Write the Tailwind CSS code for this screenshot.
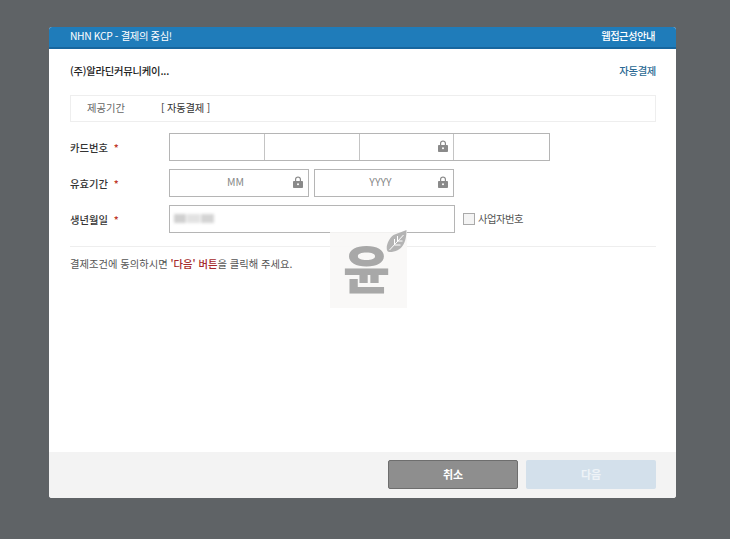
<!DOCTYPE html>
<html lang="ko">
<head>
  <meta charset="UTF-8" />
  <title>NHN KCP</title>
  <script src="https://cdn.jsdelivr.net/npm/@tailwindcss/browser@4"></script>
</head>
<body class="bg-[#5f6366] font-['Noto_Sans_CJK_KR','Noto_Sans',sans-serif] text-[10.3px] text-[#444]">
  <div class="h-[539px] pt-[27px] pl-[49px]">
    <div class="relative flex h-[471px] w-[627px] flex-col overflow-hidden rounded-[3px] bg-white">
      <!-- 상단 바 -->
      <div class="flex h-[22px] shrink-0 items-center justify-between border-b-2 border-[#17669e] bg-[#1f7cba] px-[21px] pb-[2px] text-white">
        <span class="tracking-[-0.35px]">NHN KCP - 결제의 중심!</span>
        <span class="font-medium tracking-[-0.5px]">웹접근성안내</span>
      </div>

      <div class="flex-1 pr-[20px] pl-[21px]">
        <div class="flex h-[46px] items-center justify-between pb-[3px]">
          <span class="font-medium tracking-[-0.2px] text-[#222]">(주)알라딘커뮤니케이...</span>
          <span class="font-medium tracking-[-0.3px] text-[#2b6a94]">자동결제</span>
        </div>

        <div class="flex h-[27px] items-center border border-[#eee] pb-[2px] text-[#666]">
          <span class="w-[90px] pl-[16px]">제공기간</span>
          <span class="tracking-[-0.2px] text-[#333]">[ 자동결제 ]</span>
        </div>

        <!-- 입력 폼 -->
        <div class="mt-[11px] flex h-[28px] items-center">
          <label class="w-[99px] pt-[1px] font-medium text-[#333]">카드번호 <span class="ml-[3px] text-[#c0392b]">*</span></label>
          <div class="flex h-[28px] w-[381px] border border-[#b5b5b5]">
            <div class="w-[95px] border-r border-[#c4c4c4]"></div>
            <div class="w-[95px] border-r border-[#c4c4c4]"></div>
            <div class="flex w-[94px] items-center justify-end border-r border-[#c4c4c4] pr-[5px] pb-[2px]">
              <svg class="h-[12px] w-[10px]" viewBox="0 0 10 12" fill="#8a8a8a"><path d="M1 5h1V3.2C2 1.5 3.3.5 5 .5s3 1 3 2.7V5h1c.5 0 1 .4 1 1v5c0 .6-.5 1-1 1H1c-.5 0-1-.4-1-1V6c0-.6.5-1 1-1zm2.2 0h3.6V3.2C6.800 2.200 6 1.700 5 1.700s-1.800.5-1.800 1.500V5z"/><circle cx="5" cy="8.300" r="1" fill="#fff"/></svg>
            </div>
            <div class="flex-1"></div>
          </div>
        </div>

        <div class="mt-[8px] flex h-[28px] items-center">
          <label class="w-[99px] pt-[1px] font-medium text-[#333]">유효기간 <span class="ml-[3px] text-[#c0392b]">*</span></label>
          <div class="flex h-[28px] w-[140px] items-center border border-[#b5b5b5] pr-[5px] pb-[2px] text-[#888]">
            <span class="flex-1 pl-[8px] text-center text-[10.500px]">MM</span>
            <svg class="h-[12px] w-[10px]" viewBox="0 0 10 12" fill="#8a8a8a"><path d="M1 5h1V3.2C2 1.5 3.3.5 5 .5s3 1 3 2.7V5h1c.5 0 1 .4 1 1v5c0 .6-.5 1-1 1H1c-.5 0-1-.4-1-1V6c0-.6.5-1 1-1zm2.2 0h3.6V3.2C6.800 2.200 6 1.700 5 1.700s-1.800.5-1.800 1.500V5z"/><circle cx="5" cy="8.300" r="1" fill="#fff"/></svg>
          </div>
          <div class="ml-[5px] flex h-[28px] w-[140px] items-center border border-[#b5b5b5] pr-[5px] pb-[2px] text-[#888]">
            <span class="flex-1 pl-[8px] text-center text-[10.500px]">YYYY</span>
            <svg class="h-[12px] w-[10px]" viewBox="0 0 10 12" fill="#8a8a8a"><path d="M1 5h1V3.2C2 1.5 3.3.5 5 .5s3 1 3 2.7V5h1c.5 0 1 .4 1 1v5c0 .6-.5 1-1 1H1c-.5 0-1-.4-1-1V6c0-.6.5-1 1-1zm2.2 0h3.6V3.2C6.800 2.200 6 1.700 5 1.700s-1.800.5-1.800 1.500V5z"/><circle cx="5" cy="8.300" r="1" fill="#fff"/></svg>
          </div>
        </div>

        <div class="mt-[8px] flex h-[28px] items-center">
          <label class="w-[99px] pt-[1px] font-medium text-[#333]">생년월일 <span class="ml-[3px] text-[#c0392b]">*</span></label>
          <div class="flex h-[28px] w-[286px] items-center border border-[#b5b5b5] pb-[2px] pl-[4px]">
            <div class="flex h-[9px] w-[40px] gap-[1px] blur-[1.500px]">
              <div class="w-[12px] bg-[#d0d0d0]"></div>
              <div class="w-[14px] bg-[#e2e2e2]"></div>
              <div class="w-[13px] bg-[#d4d4d4]"></div>
            </div>
          </div>
          <span class="ml-[8px] h-[12px] w-[12px] border border-[#aaa] bg-[#f4f4f4]"></span>
          <span class="ml-[3px] tracking-[-0.45px] text-[#555]">사업자번호</span>
        </div>

        <div class="mt-[13px] border-t border-[#eee] pt-[9px] text-[#555]">
          결제조건에 동의하시면 <span class="font-medium text-[#a52a2a]">'다음' 버튼</span>을 클릭해 주세요.
        </div>
      </div>

      <!-- 하단 버튼 -->
      <div class="flex h-[46px] shrink-0 items-start justify-end gap-[8px] bg-[#f3f3f3] pt-[8px] pr-[20px]">
        <button class="h-[29px] w-[130px] rounded-[2px] border border-[#6e6e6e] bg-[#8e8e8e] pb-[1px] text-[11px] font-bold text-white">취소</button>
        <button class="h-[29px] w-[130px] rounded-[2px] bg-[#d3e0eb] pb-[1px] text-[11px] font-bold text-[#eef3f7]">다음</button>
      </div>

      <!-- 워터마크 -->
      <div class="absolute top-[205px] left-[281px] flex h-[76px] w-[77px] items-center justify-center bg-[#f8f7f6]/90">
        <span class="pr-[4px] pb-[6px] text-[51px] leading-none font-black text-[#a8a8a8]">윤</span>
        <svg class="absolute -top-[2px] right-0 h-[24px] w-[21px]" viewBox="0 0 20 24">
          <path d="M20 0C20 12 16 22 3 22 -2 22 0 10 7 5 11 3 16 2 20 0z" fill="#b4b4b4"/>
          <path d="M3 20L17 5M8 15V9M11 12V6M8 15H14M11 11H16" stroke="#fff" stroke-width="1" fill="none"/>
        </svg>
      </div>
    </div>
  </div>
</body>
</html>
